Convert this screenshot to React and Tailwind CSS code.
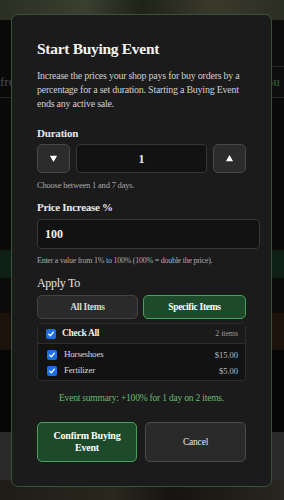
import { useState } from "react";

const items = [
  { name: "Horseshoes", price: "$15.00" },
  { name: "Fertilizer", price: "$5.00" },
];

function Check() {
  return (
    <span className="flex h-[10px] w-[10px] shrink-0 items-center justify-center rounded-[2px] bg-[#1a6fe8]">
      <svg viewBox="0 0 10 10" className="h-[8px] w-[8px]" fill="none">
        <path d="M2 5.2 L4.1 7.2 L8 2.6" stroke="white" strokeWidth="1.6" strokeLinecap="round" strokeLinejoin="round" />
      </svg>
    </span>
  );
}

export default function App() {
  const [days, setDays] = useState(1);
  const [pct, setPct] = useState("100");

  return (
    <div className="relative h-[500px] w-[284px] overflow-hidden bg-[#080808] font-['Liberation_Serif',serif]">
      {/* page behind the modal (dimmed) */}
      <div className="flex h-full flex-col">
        <div className="h-[20px] bg-[linear-gradient(90deg,#2a2f22,#3b3f30_30%,#1f2318_50%,#3a3a2c_75%,#2b2e22)]" />
        <div className="flex h-[46px]">
          <div className="w-[240px] bg-[#0a0a0a]" />
          <div className="flex-1 bg-[#0d0d0d]" />
        </div>
        <div className="flex h-[32px] border-b border-[#1f2a1f]">
          <div className="flex w-[240px] items-center bg-[#0a0a0a] text-[13px] text-[#4a4a4a]">fro</div>
          <div className="flex flex-1 items-center justify-end border-t border-[#1f2a1f] bg-[#0e0e0e] pr-1 text-[12px] font-bold text-[#2d4a30]">Bu</div>
        </div>
        <div className="h-[152px] bg-[#0a0a0a]" />
        <div className="h-[28px] bg-[#0e2015]" />
        <div className="h-[35px] bg-[#0b0b0b]" />
        <div className="h-[37px] bg-[#1b120c]" />
        <div className="h-[82px] bg-[#060606]" />
        <div className="h-[48px] bg-[#2a2a2a]" />
        <div className="flex-1 bg-[linear-gradient(90deg,#1e1c16,#2a271e_40%,#151410_60%,#2a2620)]" />
      </div>

      {/* modal */}
      <div className="absolute left-[11px] top-[14px] h-[473px] w-[261px] rounded-[7px] border border-[#34533a] bg-[#1b1b1b] px-[25px] pt-[24px] text-[#e8e8e8]">
        <h2 className="text-[15.5px] font-bold leading-[20px] tracking-[-0.3px] text-[#f4f4f4]">Start Buying Event</h2>
        <p className="mt-[10px] w-[212px] text-[10px] leading-[14px] tracking-[-0.25px] text-[#cfcfcf]">
          Increase the prices your shop pays for buy orders by a percentage for a set duration. Starting a Buying Event ends any active sale.
        </p>

        <div className="mt-[14px] text-[11px] font-bold leading-[16px] tracking-[-0.2px]">Duration</div>
        <div className="mt-[3px] flex w-[209px] gap-[6px]">
          <button
            onClick={() => setDays(Math.max(1, days - 1))}
            className="flex h-[29px] w-[33px] items-center justify-center rounded-[5px] border border-[#474747] bg-[#2c2c2c]"
          >
            <svg viewBox="0 0 10 10" className="h-[9px] w-[9px]"><path d="M1 2 H9 L5 9 Z" fill="white" /></svg>
          </button>
          <div className="flex h-[29px] flex-1 items-center justify-center rounded-[4px] border border-[#363636] bg-[#121212] text-[12px] font-bold">
            {days}
          </div>
          <button
            onClick={() => setDays(Math.min(7, days + 1))}
            className="flex h-[29px] w-[33px] items-center justify-center rounded-[5px] border border-[#474747] bg-[#2c2c2c]"
          >
            <svg viewBox="0 0 10 10" className="h-[9px] w-[9px]"><path d="M1 8 H9 L5 1 Z" fill="white" /></svg>
          </button>
        </div>
        <div className="mt-[6px] text-[8.5px] leading-[12px] tracking-[-0.2px] text-[#a9a9a9]">Choose between 1 and 7 days.</div>

        <div className="mt-[8px] text-[11px] font-bold leading-[16px] tracking-[-0.3px]">Price Increase %</div>
        <input
          value={pct}
          onChange={(e) => setPct(e.target.value)}
          className="mt-[4px] block h-[30px] w-[223px] rounded-[4px] border border-[#363636] bg-[#121212] px-[7px] text-[12px] font-bold text-[#f0f0f0] outline-none"
        />
        <div className="mt-[6px] whitespace-nowrap text-[8px] leading-[12px] tracking-[-0.25px] text-[#a9a9a9]">
          Enter a value from 1% to 100% (100% = double the price).
        </div>

        <div className="mt-[8px] text-[12px] leading-[16px] tracking-[-0.3px] text-[#e6e6e6]">Apply To</div>
        <div className="mt-[4px] flex w-[209px] gap-[5px]">
          <button className="h-[24px] flex-1 rounded-[5px] border border-[#444] bg-[#2a2a2a] text-[9.5px] font-bold tracking-[-0.3px] text-[#d8d8d8]">
            All Items
          </button>
          <button className="h-[24px] w-[103px] rounded-[5px] border border-[#46a25a] bg-[#1d4a2a] text-[9.5px] font-bold tracking-[-0.3px] text-white">
            Specific Items
          </button>
        </div>

        <div className="mt-[4px] w-[209px] rounded-[4px] border border-[#2c2c2c] bg-[#121212]">
          <div className="flex h-[20px] items-center border-b border-[#2e2e2e] bg-[#1a1a1a] pl-[8px] pr-[7px]">
            <Check />
            <span className="ml-[6px] text-[9.5px] font-bold tracking-[-0.3px] text-[#eeeeee]">Check All</span>
            <span className="ml-auto text-[8px] tracking-[-0.1px] text-[#9a9a9a]">2 items</span>
          </div>
          <div className="flex flex-col gap-[4px] pb-[3px] pt-[5px]">
            {items.map((it) => (
              <div key={it.name} className="flex h-[12px] items-center pl-[9px] pr-[7px]">
                <Check />
                <span className="ml-[7px] text-[9px] tracking-[-0.2px] text-[#dcdcdc]">{it.name}</span>
                <span className="ml-auto text-[8.5px] text-[#bdbdbd]">{it.price}</span>
              </div>
            ))}
          </div>
        </div>

        <div className="mt-[10px] w-[209px] text-center text-[9.5px] leading-[14px] tracking-[-0.2px] text-[#6cb872]">
          Event summary: +100% for 1 day on 2 items.
        </div>

        <div className="mt-[17px] flex w-[209px] gap-[8px]">
          <button className="h-[40px] w-[100px] rounded-[5px] border border-[#46a25a] bg-[#1d4a2a] px-[8px] text-[10px] font-bold leading-[12px] tracking-[-0.2px] text-white">
            Confirm Buying Event
          </button>
          <button className="h-[40px] flex-1 rounded-[5px] border border-[#4a4a4a] bg-[#2a2a2a] text-[9.5px] tracking-[-0.2px] text-[#e6e6e6]">
            Cancel
          </button>
        </div>
      </div>
    </div>
  );
}
